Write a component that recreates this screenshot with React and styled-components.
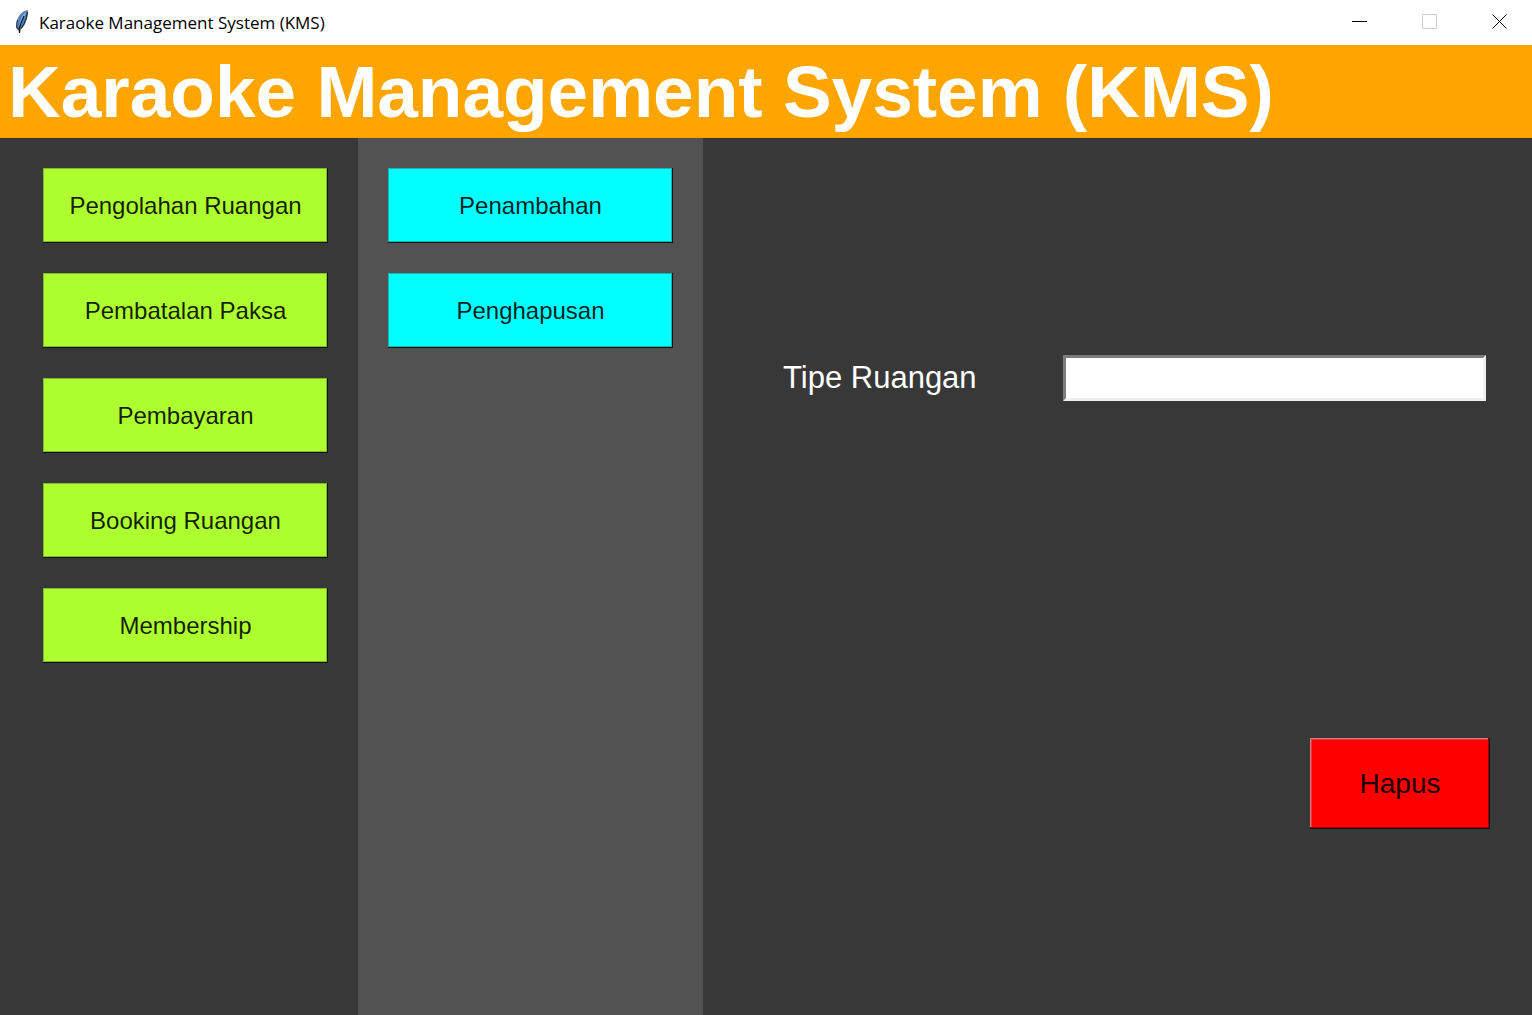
import React from "react";
import styled, { createGlobalStyle } from "styled-components";

const GlobalStyle = createGlobalStyle`
  * { box-sizing: border-box; }
  body {
    margin: 0;
    background: #383838;
    font-family: "Liberation Sans", Arial, sans-serif;
  }
`;

const Window = styled.div`
  display: flex;
  flex-direction: column;
  min-height: 100vh;
`;

const TitleBar = styled.div`
  display: flex;
  align-items: center;
  height: 45px;
  padding-left: 14px;
  background: #fff;
`;

const WindowName = styled.span`
  flex: 1;
  padding-left: 9px;
  font-family: "Open Sans", "Noto Sans", sans-serif;
  font-size: 17px;
  line-height: 24px;
  color: #000;
`;

const WindowButton = styled.button`
  display: flex;
  align-items: center;
  align-self: flex-start;
  justify-content: center;
  width: 70px;
  height: 44px;
  padding: 0 0 0 6px;
  border: 0;
  background: none;
  color: ${(p) => (p.disabled ? "#ccc" : "#000")};
`;

const Banner = styled.header`
  height: 93px;
  padding: 0 8px;
  background: #ffa500;
`;

const Heading = styled.h1`
  margin: 0;
  font-size: 73px;
  line-height: 93px;
  font-weight: bold;
  color: #fff;
  white-space: nowrap;
`;

const Body = styled.div`
  display: flex;
  flex: 1;
`;

const Menu = styled.nav`
  display: flex;
  flex-direction: column;
  flex: none;
  gap: 30px;
  padding: 30px 30px 30px ${(p) => (p.$sub ? 30 : 43)}px;
  background: ${(p) => (p.$sub ? "#525252" : "#383838")};
`;

const RaisedButton = styled.button`
  padding: 0;
  border: 0;
  background: ${(p) => p.$color};
  font-family: inherit;
  color: #000;
`;

const MenuButton = styled(RaisedButton)`
  width: 285px;
  height: 75px;
  font-size: 24px;
  line-height: 28px;
  color: rgba(0, 0, 0, 0.88);
  box-shadow: inset -1px -1px #111, inset -2px -2px ${(p) => p.$shade},
    inset 1px 1px ${(p) => p.$shade};
`;

const Panel = styled.form`
  display: flex;
  flex-direction: column;
  flex: 1;
  min-width: 0;
  padding: 217px 42px 40px 80px;
`;

const Field = styled.div`
  display: flex;
  align-items: center;
  padding-right: 4px;
`;

const Label = styled.label`
  flex: none;
  width: 280px;
  font-size: 31px;
  line-height: 36px;
  color: #fff;
`;

const TextBox = styled.input`
  flex: 1;
  min-width: 0;
  height: 46px;
  padding: 0 6px;
  border: 3px solid;
  border-color: #7c7c7c #f0f0f0 #f0f0f0 #7c7c7c;
  border-radius: 0;
  outline: 0;
  background: #fff;
  font-family: inherit;
  font-size: 31px;
`;

const DeleteButton = styled(RaisedButton)`
  align-self: flex-end;
  width: 180px;
  height: 91px;
  margin-top: 337px;
  font-size: 28px;
  line-height: 34px;
  color: #190000;
  box-shadow: inset -1px -1px #111, inset -2px -2px #a00000,
    inset 1px 1px #d08080, inset 2px 2px #ff3030;
`;

const Feather = () => (
  <svg width="16" height="28" viewBox="0 0 16 28" aria-hidden="true">
    <path
      d="M13.500 1.500C9 2 5 6 3.500 11C2.500 14 2 17 3 19.500L5 21L5.500 24L6.500 20.500C9 18 11 15 12 11C13 8 14 5 13.500 1.500Z"
      fill="#4a82c4"
      stroke="#8a8f94"
      strokeWidth="1"
    />
    <path d="M12 3C9 5 7 8 6 12L5 16L8 14L9 10L11 7Z" fill="#7aaee6" />
    <path d="M13.500 3L12 10L10 15L7 19.500" fill="none" stroke="#2a2e34" strokeWidth="1.200" />
    <path d="M10 7L7 14L5.500 19L5.500 24" fill="none" stroke="#141a22" strokeWidth="1.200" />
    <path d="M3.500 11L2.500 18L5 21" fill="none" stroke="#3a3e44" strokeWidth="1.200" />
  </svg>
);

const Glyph = ({ d }) => (
  <svg width="16" height="16" viewBox="0 0 16 16" aria-hidden="true">
    <path d={d} fill="none" stroke="currentColor" strokeWidth="1" />
  </svg>
);

const mainMenu = [
  "Pengolahan Ruangan",
  "Pembatalan Paksa",
  "Pembayaran",
  "Booking Ruangan",
  "Membership",
];
const roomMenu = ["Penambahan", "Penghapusan"];

export default function App() {
  return (
    <Window>
      <GlobalStyle />
      <TitleBar>
        <Feather />
        <WindowName>Karaoke Management System (KMS)</WindowName>
        <WindowButton aria-label="Minimize">
          <Glyph d="M0 7.500H15" />
        </WindowButton>
        <WindowButton aria-label="Maximize" disabled>
          <Glyph d="M0.500 0.500H14.500V14.500H0.500Z" />
        </WindowButton>
        <WindowButton aria-label="Close">
          <Glyph d="M0.500 0.500L14.500 14.500M14.500 0.500L0.500 14.500" />
        </WindowButton>
      </TitleBar>
      <Banner>
        <Heading>Karaoke Management System (KMS)</Heading>
      </Banner>
      <Body>
        <Menu aria-label="Menu">
          {mainMenu.map((name) => (
            <MenuButton key={name} $color="#adff2f" $shade="#7fbb2a">
              {name}
            </MenuButton>
          ))}
        </Menu>
        <Menu $sub aria-label="Ruangan">
          {roomMenu.map((name) => (
            <MenuButton key={name} $color="#00ffff" $shade="#17b4b4">
              {name}
            </MenuButton>
          ))}
        </Menu>
        <Panel onSubmit={(e) => e.preventDefault()}>
          <Field>
            <Label htmlFor="room-type">Tipe Ruangan</Label>
            <TextBox id="room-type" type="text" />
          </Field>
          <DeleteButton $color="#ff0000">Hapus</DeleteButton>
        </Panel>
      </Body>
    </Window>
  );
}
